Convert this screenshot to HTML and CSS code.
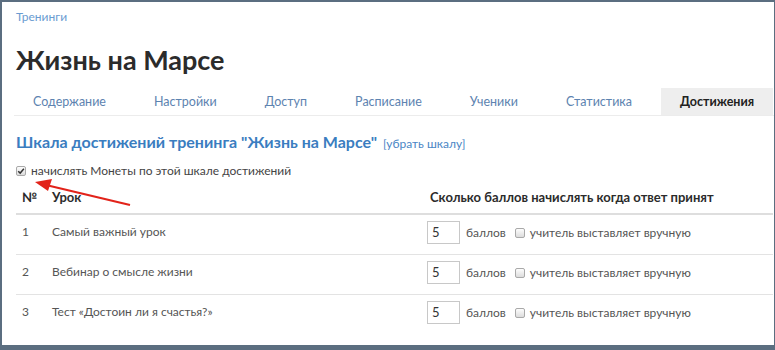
FILE: index.html
```html
<!DOCTYPE html>
<html lang="ru">
<head>
  <meta charset="UTF-8">
  <title>Жизнь на Марсе</title>
  <link rel="stylesheet" href="styles.css">
</head>
<body>
  <div class="frame">
    <div class="breadcrumb"><a href="#">Тренинги</a></div>
    <h1>Жизнь на Марсе</h1>

    <ul class="tabs">
      <li><a href="#">Содержание</a></li>
      <li><a href="#">Настройки</a></li>
      <li><a href="#">Доступ</a></li>
      <li><a href="#">Расписание</a></li>
      <li><a href="#">Ученики</a></li>
      <li><a href="#">Статистика</a></li>
      <li class="active"><a href="#">Достижения</a></li>
    </ul>

    <h2>Шкала достижений тренинга "Жизнь на Марсе" <a href="#" class="remove">[убрать шкалу]</a></h2>

    <label class="coins">
      <span class="box checked">
        <svg viewBox="0 0 10 10" width="8" height="8"><path d="M1.5 5.2 L4 7.6 L8.6 2.2" fill="none" stroke="#333" stroke-width="1.8"/></svg>
      </span>
      начислять Монеты по этой шкале достижений
    </label>

    <table class="scale">
      <thead>
        <tr>
          <th class="num">№</th>
          <th class="lesson">Урок</th>
          <th class="pts">Сколько баллов начислять когда ответ принят</th>
        </tr>
      </thead>
      <tbody>
        <tr>
          <td class="num">1</td>
          <td class="lesson">Самый важный урок</td>
          <td><span class="points">5</span><span class="unit">баллов</span><label class="manual"><span class="box"></span>учитель выставляет вручную</label></td>
        </tr>
        <tr>
          <td class="num">2</td>
          <td class="lesson">Вебинар о смысле жизни</td>
          <td><span class="points">5</span><span class="unit">баллов</span><label class="manual"><span class="box"></span>учитель выставляет вручную</label></td>
        </tr>
        <tr>
          <td class="num">3</td>
          <td class="lesson">Тест «Достоин ли я счастья?»</td>
          <td><span class="points">5</span><span class="unit">баллов</span><label class="manual"><span class="box"></span>учитель выставляет вручную</label></td>
        </tr>
      </tbody>
    </table>

    <svg class="arrow" width="140" height="40" viewBox="0 0 140 40">
      <line x1="128" y1="31" x2="44" y2="11" stroke="#e2231a" stroke-width="2.2"/>
      <polygon points="33,8 50,5 46,17" fill="#e2231a"/>
    </svg>
  </div>
</body>
</html>
```

FILE: styles.css
```css
body {
  margin: 0;
  padding: 2px 1px 0 2px;
  background-color: #5b6e80;
  font-family: Lato, "Open Sans", sans-serif;
  color: #444;
  overflow: hidden;
}

a {
  text-decoration: none;
}

.frame {
  position: relative;
  height: 343px;
  padding: 7px 0 0 14px;
  box-sizing: border-box;
  background: #fff;
  overflow: hidden;
}

.breadcrumb {
  font-size: 12px;
  line-height: 16px;
}

.breadcrumb a {
  color: #6a9bd1;
}

h1 {
  margin: 19px 0 12px;
  font-size: 27px;
  line-height: 32px;
  font-weight: 700;
  color: #2b2b2b;
}

.tabs {
  display: flex;
  gap: 10px;
  margin: 0 0 0 -2px;
  padding: 0;
  list-style: none;
  border-bottom: 1px solid #ececec;
}

.tabs li a {
  display: block;
  padding: 0 19px;
  font-size: 12.5px;
  line-height: 27px;
  color: #5d83b0;
}

.tabs li.active {
  background: #eeeeee;
}

.tabs li.active a {
  color: #222;
  font-weight: 700;
}

h2 {
  margin: 16px 0 8px;
  font-size: 16px;
  line-height: 20px;
  font-weight: 700;
  color: #3a7dc0;
}

h2 .remove {
  margin-left: 2px;
  font-size: 12px;
  font-weight: 400;
  color: #4a86c5;
}

.coins {
  display: flex;
  align-items: center;
  gap: 5px;
  font-size: 12px;
  line-height: 18px;
  color: #444;
}

.box {
  display: inline-flex;
  align-items: center;
  justify-content: center;
  width: 10px;
  height: 10px;
  box-sizing: border-box;
  border: 1px solid #a9a9a9;
  border-radius: 2px;
  background: linear-gradient(#fdfdfd, #dcdcdc);
}

.scale {
  width: 757px;
  margin-top: 8px;
  border-collapse: collapse;
  font-size: 12px;
}

.scale th {
  padding: 0 6px 7px;
  text-align: left;
  font-size: 13px;
  font-weight: 700;
  color: #2b2b2b;
  line-height: 18px;
  border-bottom: 2px solid #dedede;
}

.scale th.pts {
  padding-left: 9px;
}

.scale td {
  height: 33px;
  padding: 6px 6px 0;
  vertical-align: top;
  line-height: 23px;
  color: #555;
  border-bottom: 1px solid #e3e3e3;
}

.scale td.num,
.scale td.lesson {
  line-height: 21px;
}

.scale tbody tr:last-child td {
  border-bottom: none;
}

.scale .num {
  width: 18px;
}

.scale .lesson {
  width: 363px;
}

.points {
  display: inline-block;
  width: 33px;
  height: 23px;
  box-sizing: border-box;
  padding-left: 4px;
  border: 1px solid #c8c8c8;
  font-size: 13px;
  line-height: 21px;
  vertical-align: top;
  color: #333;
}

.unit {
  margin: 0 9px 0 6px;
  vertical-align: top;
}

.manual {
  display: inline-flex;
  align-items: center;
  gap: 5px;
  height: 23px;
  vertical-align: top;
}

.arrow {
  position: absolute;
  left: 0;
  top: 172px;
}
```
